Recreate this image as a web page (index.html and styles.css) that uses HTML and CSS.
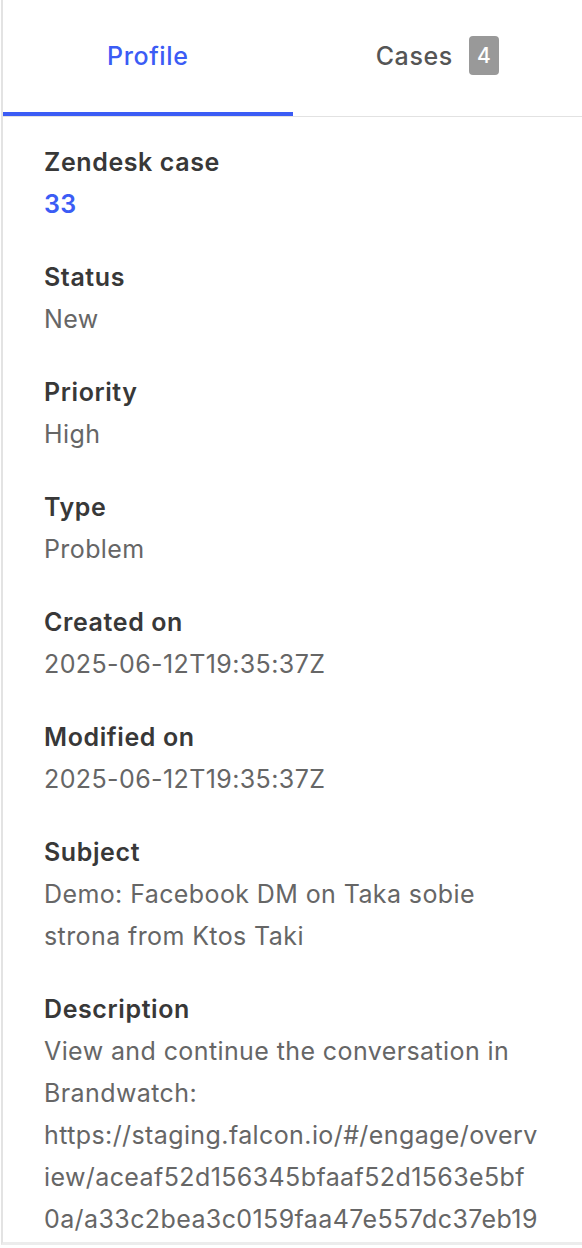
FILE: index.html
```html
<!DOCTYPE html>
<html lang="en">
<head>
<meta charset="utf-8">
<title>Zendesk case</title>
<link rel="stylesheet" href="styles.css">
</head>
<body>
<div class="panel">
  <nav class="tabs">
    <div class="tab tab-active">Profile</div>
    <div class="tab">Cases <span class="badge">4</span></div>
  </nav>
  <div class="fields">
    <div class="field">
      <div class="label">Zendesk case</div>
      <div class="value value-link">33</div>
    </div>
    <div class="field">
      <div class="label">Status</div>
      <div class="value">New</div>
    </div>
    <div class="field">
      <div class="label">Priority</div>
      <div class="value">High</div>
    </div>
    <div class="field">
      <div class="label">Type</div>
      <div class="value">Problem</div>
    </div>
    <div class="field">
      <div class="label">Created on</div>
      <div class="value">2025-06-12T19:35:37Z</div>
    </div>
    <div class="field">
      <div class="label">Modified on</div>
      <div class="value">2025-06-12T19:35:37Z</div>
    </div>
    <div class="field">
      <div class="label">Subject</div>
      <div class="value">Demo: Facebook DM on Taka sobie strona from Ktos Taki</div>
    </div>
    <div class="field">
      <div class="label">Description</div>
      <div class="value">View and continue the conversation in Brandwatch:<br><span class="url">https://staging.falcon.io/#/engage/overview/aceaf52d156345bfaaf52d1563e5bf0a/a33c2bea3c0159faa47e557dc37eb19</span></div>
    </div>
  </div>
</div>
</body>
</html>
```
FILE: styles.css
```css
html, body {
  margin: 0;
  padding: 0;
  background: #ffffff;
}

body {
  font-family: Inter, "Liberation Sans", sans-serif;
  overflow: hidden;
}

.panel {
  margin-left: 1px;
  border-left: 2px solid #e3e3e3;
  border-bottom: 3px solid #ececec;
  height: 1245px;
  box-sizing: border-box;
  overflow: hidden;
}

.tabs {
  display: flex;
  height: 117px;
  border-bottom: 1px solid #e2e2e2;
  box-sizing: border-box;
}

.tab {
  flex: 1;
  display: flex;
  align-items: center;
  justify-content: center;
  gap: 16px;
  font-size: 25px;
  letter-spacing: 0.6px;
  font-weight: 500;
  color: #555555;
  padding-bottom: 5px;
  box-sizing: border-box;
}

.tab-active {
  color: #3b5cf5;
  border-bottom: 4px solid #3b5cf5;
  padding-bottom: 1px;
}

.badge {
  display: inline-flex;
  align-items: center;
  justify-content: center;
  width: 30px;
  height: 39px;
  border-radius: 4px;
  background: #999999;
  color: #ffffff;
  font-size: 21px;
  letter-spacing: 0;
  font-weight: 500;
}

.fields {
  display: flex;
  flex-direction: column;
  gap: 31px;
  padding: 24px 42px 0 41px;
}

.field {
  font-size: 25px;
  line-height: 42px;
  letter-spacing: 0.4px;
}

.label {
  font-weight: 600;
  letter-spacing: 0.6px;
  color: #383838;
}

.value {
  color: #666666;
}

.value-link {
  color: #3b5cf5;
  font-weight: 600;
}

.url {
  word-break: break-all;
}
```
